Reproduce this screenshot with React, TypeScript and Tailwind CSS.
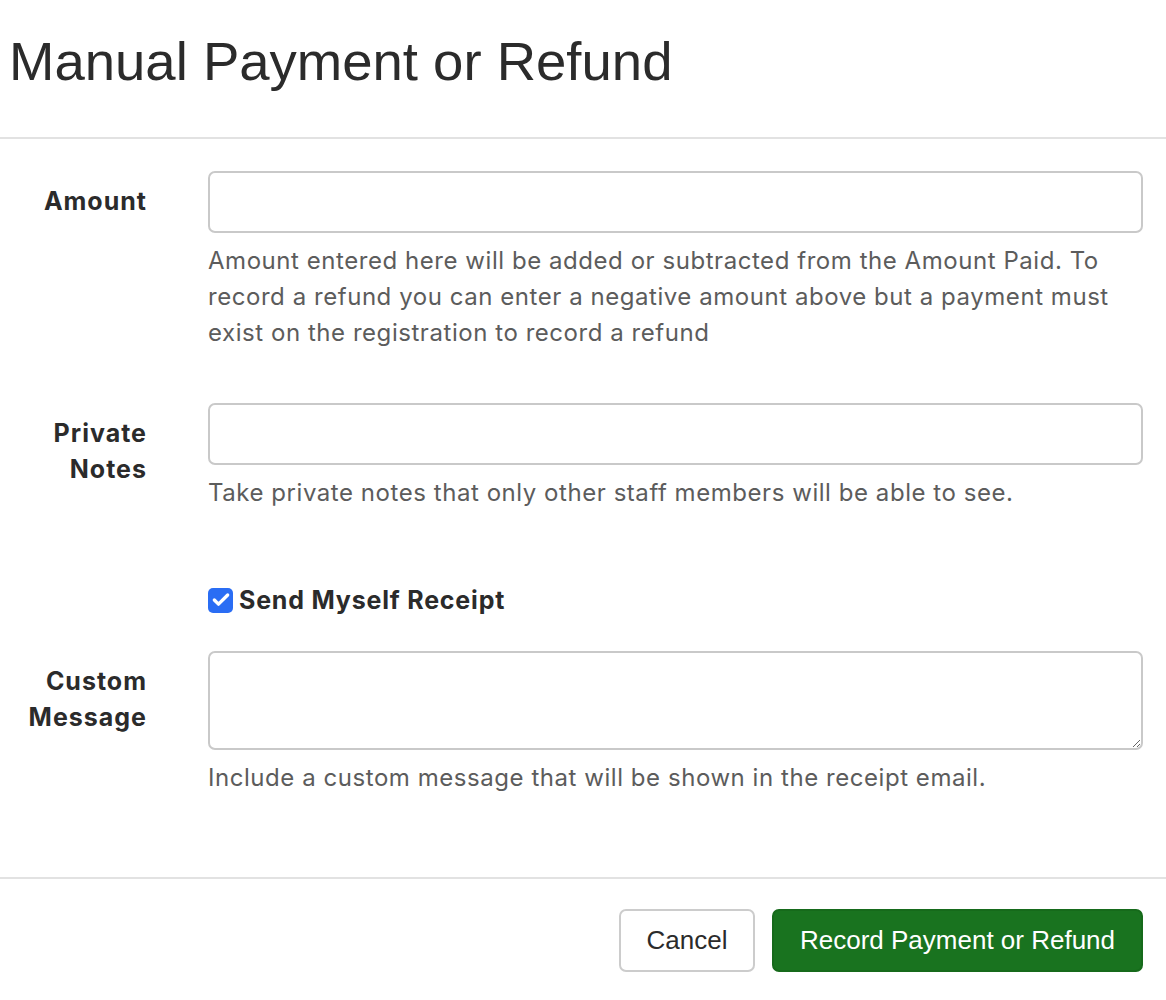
import { Check } from 'lucide-react'

function Field({ label, help, children }: { label: React.ReactNode; help: string; children: React.ReactNode }) {
  return (
    <div className="flex">
      <div className="w-[147px] shrink-0 pt-[12px] text-right text-[25px] leading-[36px] font-bold tracking-[1px] text-[#2b2b2b]">
        {label}
      </div>
      <div className="ml-[61px] w-[935px]">
        {children}
        <p className="mt-[10px] text-[24px] leading-[36px] tracking-[0.55px] text-[#5c5c5c]">{help}</p>
      </div>
    </div>
  )
}

export default function App() {
  return (
    <div className="w-[1166px] h-[1000px] bg-white font-['Inter',sans-serif] overflow-hidden">
      <div className="h-[137px] pt-[31px] pl-[9px]">
        <h1 className="font-['Liberation_Sans',Arial,sans-serif] text-[54.5px] leading-[62px] text-[#2b2b2b]">
          Manual Payment or Refund
        </h1>
      </div>
      <div className="h-[2px] bg-[#e2e2e2]" />

      <div className="pt-[32px] flex flex-col">
        <Field
          label="Amount"
          help="Amount entered here will be added or subtracted from the Amount Paid. To record a refund you can enter a negative amount above but a payment must exist on the registration to record a refund"
        >
          <input className="block w-full h-[62px] rounded-[7px] border-2 border-[#c9c9c9] px-4 text-[24px] outline-none" />
        </Field>

        <div className="mt-[52px]">
          <Field
            label={<>Private<br />Notes</>}
            help="Take private notes that only other staff members will be able to see."
          >
            <input className="block w-full h-[62px] rounded-[7px] border-2 border-[#c9c9c9] px-4 text-[24px] outline-none" />
          </Field>
        </div>

        <div className="mt-[74px] ml-[208px] flex items-center h-[30px]">
          <span className="flex items-center justify-center w-[25px] h-[25px] rounded-[5px] bg-[#2a6df4] text-white">
            <Check size={20} strokeWidth={4} />
          </span>
          <span className="ml-[6px] text-[25px] leading-[30px] font-bold tracking-[0.8px] text-[#2b2b2b]">Send Myself Receipt</span>
        </div>

        <div className="mt-[36px]">
          <Field
            label={<>Custom<br />Message</>}
            help="Include a custom message that will be shown in the receipt email."
          >
            <textarea className="block w-full h-[99px] rounded-[7px] border-2 border-[#c9c9c9] px-4 py-2 text-[24px] outline-none resize-y" />
          </Field>
        </div>
      </div>

      <div className="mt-[81px] h-[2px] bg-[#e2e2e2]" />
      <div className="flex justify-end gap-[17px] pt-[30px] pr-[23px] font-['Liberation_Sans',Arial,sans-serif] text-[26px]">
        <button className="h-[63px] w-[136px] rounded-[7px] border-2 border-[#cccccc] bg-white text-[#2b2b2b]">
          Cancel
        </button>
        <button className="h-[63px] w-[371px] rounded-[7px] border-2 border-[#166a1b] bg-[#19731f] text-white">
          Record Payment or Refund
        </button>
      </div>
    </div>
  )
}
